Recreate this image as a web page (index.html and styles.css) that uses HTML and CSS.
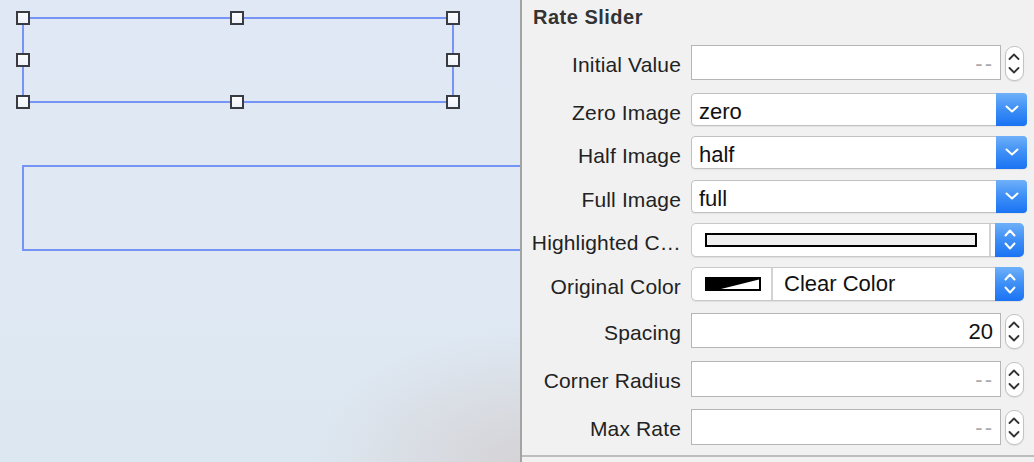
FILE: index.html
```html
<!DOCTYPE html>
<html lang="en">
<head>
<meta charset="utf-8">
<title>Rate Slider Inspector</title>
<link rel="stylesheet" href="styles.css">
</head>
<body>
<div class="app">
  <div class="canvas">
    <div class="view selected">
      <span class="handle tl"></span><span class="handle tc"></span><span class="handle tr"></span>
      <span class="handle ml"></span><span class="handle mr"></span>
      <span class="handle bl"></span><span class="handle bc"></span><span class="handle br"></span>
    </div>
    <div class="view second"></div>
  </div>

  <aside class="inspector">
    <h2 class="title">Rate Slider</h2>
    <div class="rows">
      <div class="row tall">
        <span class="label">Initial Value</span>
        <div class="control">
          <div class="field placeholder">--</div>
          <div class="stepper"><svg viewBox="0 0 17 33" width="17" height="33"><polyline points="3.5,12 8,7.5 12.5,12"/><polyline points="3.5,21 8,25.5 12.5,21"/></svg></div>
        </div>
      </div>
      <div class="row short">
        <span class="label">Zero Image</span>
        <div class="control">
          <div class="popup"><span class="popup-value">zero</span><span class="popup-arrow"><svg viewBox="0 0 14 8" width="14" height="8"><polyline points="1.5,1.5 7,6.5 12.5,1.5"/></svg></span></div>
        </div>
      </div>
      <div class="row">
        <span class="label">Half Image</span>
        <div class="control">
          <div class="popup"><span class="popup-value">half</span><span class="popup-arrow"><svg viewBox="0 0 14 8" width="14" height="8"><polyline points="1.5,1.5 7,6.5 12.5,1.5"/></svg></span></div>
        </div>
      </div>
      <div class="row short">
        <span class="label">Full Image</span>
        <div class="control">
          <div class="popup"><span class="popup-value">full</span><span class="popup-arrow"><svg viewBox="0 0 14 8" width="14" height="8"><polyline points="1.5,1.5 7,6.5 12.5,1.5"/></svg></span></div>
        </div>
      </div>
      <div class="row">
        <span class="label">Highlighted C…</span>
        <div class="control">
          <div class="well">
            <span class="well-swatch"><span class="bar"></span></span>
            <span class="well-sep"></span>
            <span class="well-arrow"><svg viewBox="0 0 12 22" width="12" height="22"><polyline points="1.5,6.5 6,1.5 10.5,6.5"/><polyline points="1.5,14.5 6,19.5 10.5,14.5"/></svg></span>
          </div>
        </div>
      </div>
      <div class="row mid">
        <span class="label">Original Color</span>
        <div class="control">
          <div class="well">
            <span class="well-chip"><svg viewBox="0 0 56 14" width="56" height="14"><rect x="1" y="1" width="54" height="12" fill="#fff" stroke="#000" stroke-width="2"/><polygon points="0,0 56,0 56,2 8,14 0,14" fill="#000"/></svg></span>
            <span class="well-text">Clear Color</span>
            <span class="well-arrow"><svg viewBox="0 0 12 22" width="12" height="22"><polyline points="1.5,6.5 6,1.5 10.5,6.5"/><polyline points="1.5,14.5 6,19.5 10.5,14.5"/></svg></span>
          </div>
        </div>
      </div>
      <div class="row tall">
        <span class="label">Spacing</span>
        <div class="control">
          <div class="field">20</div>
          <div class="stepper"><svg viewBox="0 0 17 33" width="17" height="33"><polyline points="3.5,12 8,7.5 12.5,12"/><polyline points="3.5,21 8,25.5 12.5,21"/></svg></div>
        </div>
      </div>
      <div class="row tall">
        <span class="label">Corner Radius</span>
        <div class="control">
          <div class="field placeholder">--</div>
          <div class="stepper"><svg viewBox="0 0 17 33" width="17" height="33"><polyline points="3.5,12 8,7.5 12.5,12"/><polyline points="3.5,21 8,25.5 12.5,21"/></svg></div>
        </div>
      </div>
      <div class="row last">
        <span class="label">Max Rate</span>
        <div class="control">
          <div class="field placeholder">--</div>
          <div class="stepper"><svg viewBox="0 0 17 33" width="17" height="33"><polyline points="3.5,12 8,7.5 12.5,12"/><polyline points="3.5,21 8,25.5 12.5,21"/></svg></div>
        </div>
      </div>
    </div>
    <div class="divider"></div>
  </aside>
</div>
</body>
</html>
```
FILE: styles.css
```css
html, body {
  margin: 0;
  padding: 0;
}
body {
  font-family: "Liberation Sans", Arial, sans-serif;
  background: #f1f1f1;
}
.app {
  display: flex;
  width: 1034px;
  height: 462px;
  overflow: hidden;
}

/* ---------- design canvas ---------- */
.canvas {
  position: relative;
  flex: none;
  width: 520px;
  height: 462px;
  overflow: hidden;
  border-right: 2px solid #a3a3a3;
  background:
    radial-gradient(ellipse 40% 28% at 100% 100%, rgba(213, 211, 214, 1) 0%, rgba(213, 211, 214, 0) 100%),
    linear-gradient(180deg, #e1e8f5 0%, #dfe8f3 55%, #dde7f1 100%);
}
.view {
  position: absolute;
  box-sizing: border-box;
  border: 2px solid #7594f5;
}
.view.selected {
  left: 22px;
  top: 17px;
  width: 432px;
  height: 86px;
}
.view.second {
  left: 22px;
  top: 165px;
  width: 620px;
  height: 86px;
}
.handle {
  position: absolute;
  box-sizing: border-box;
  width: 14px;
  height: 14px;
  border: 2px solid #393b40;
  background: linear-gradient(180deg, #fbfcff 0%, #eef2fa 100%);
}
.handle.tl { left: -8px; top: -8px; }
.handle.tc { left: calc(50% - 8px); top: -8px; }
.handle.tr { right: -8px; top: -8px; }
.handle.ml { left: -8px; top: calc(50% - 7px); }
.handle.mr { right: -8px; top: calc(50% - 7px); }
.handle.bl { left: -8px; bottom: -8px; }
.handle.bc { left: calc(50% - 8px); bottom: -8px; }
.handle.br { right: -8px; bottom: -8px; }

/* ---------- inspector ---------- */
.inspector {
  flex: 1;
  display: flex;
  flex-direction: column;
  background: #f1f1f1;
  color: #2c2c2c;
}
.title {
  margin: 0;
  padding: 2px 0 0 11px;
  height: 30px;
  line-height: 30px;
  font-size: 20px;
  font-weight: 700;
  letter-spacing: 0.5px;
  color: #333;
}
.rows {
  margin-top: 13px;
  display: flex;
  flex-direction: column;
}
.row {
  display: grid;
  grid-template-columns: 159px 1fr;
  column-gap: 10px;
  align-items: start;
  height: 44px;
}
.row.tall { height: 48px; }
.row.short { height: 43px; }
.row.mid { height: 46px; }
.row.last { height: 36px; }

.label {
  text-align: right;
  white-space: nowrap;
  font-size: 21px;
  line-height: 34px;
  padding-top: 3px;
  letter-spacing: 0.15px;
  color: #222;
}
.control {
  display: flex;
  align-items: flex-start;
  gap: 4px;
}

/* text field */
.field {
  box-sizing: border-box;
  width: 310px;
  height: 35px;
  border: 1px solid #b5b5b5;
  background: #fff;
  font-size: 22px;
  line-height: 30px;
  padding: 3px 7px 0;
  text-align: right;
  color: #111;
}
.row.tall:nth-child(8) .field,
.row.last .field { height: 36px; }
.field.placeholder {
  color: #a9a9a9;
  letter-spacing: 2px;
  padding-right: 6px;
}

/* stepper */
.stepper {
  box-sizing: border-box;
  width: 19px;
  height: 35px;
  margin-top: 1px;
  border: 1px solid #c3c3c3;
  border-radius: 9px;
  background: #fff;
  box-shadow: 0 1px 1px rgba(0, 0, 0, 0.08);
}
.stepper svg { display: block; }
.stepper polyline {
  fill: none;
  stroke: #333;
  stroke-width: 1.8;
  stroke-linecap: round;
  stroke-linejoin: round;
}

/* popup button */
.popup {
  box-sizing: border-box;
  display: flex;
  width: 336px;
  height: 33px;
  border: 1px solid #c1c1c1;
  border-radius: 4px;
  background: #fff;
  box-shadow: 0 1px 1px rgba(0, 0, 0, 0.06);
}
.popup-value {
  flex: 1;
  font-size: 22px;
  line-height: 26px;
  padding: 5px 0 0 7px;
  color: #111;
}
.popup-arrow {
  display: flex;
  align-items: center;
  justify-content: center;
  width: 31px;
  margin: -1px -1px -1px 0;
  border-radius: 0 4px 4px 0;
  background: linear-gradient(180deg, #6fb0f9 0%, #3d8ef6 50%, #1a73f4 100%);
}
.popup-arrow svg { display: block; margin-top: -1px; }
.popup-arrow polyline,
.well-arrow polyline {
  fill: none;
  stroke: #fff;
  stroke-width: 2;
  stroke-linecap: round;
  stroke-linejoin: round;
}

/* colour well */
.well {
  box-sizing: border-box;
  display: flex;
  width: 333px;
  height: 34px;
  border: 1px solid #c9c9c9;
  border-radius: 5px;
  background: #fff;
  box-shadow: 0 1px 1px rgba(0, 0, 0, 0.08);
}
.well-swatch {
  flex: 1;
  display: flex;
  align-items: center;
  padding-left: 13px;
}
.well-swatch .bar {
  box-sizing: border-box;
  width: 272px;
  height: 14px;
  border: 2px solid #000;
  background: #efefef;
}
.well-sep {
  width: 2px;
  background: #d3d3d3;
  margin-right: 4px;
}
.well-chip {
  display: flex;
  align-items: center;
  padding: 0 10px 0 13px;
  border-right: 2px solid #d3d3d3;
}
.well-chip svg { display: block; }
.well-text {
  flex: 1;
  font-size: 22px;
  line-height: 32px;
  padding-left: 11px;
  color: #111;
}
.well-arrow {
  display: flex;
  align-items: center;
  justify-content: center;
  width: 29px;
  margin: -1px -1px -1px 0;
  border-radius: 0 5px 5px 0;
  background: linear-gradient(180deg, #6fb0f9 0%, #3d8ef6 50%, #1a73f4 100%);
}
.well-arrow svg { display: block; }

.divider {
  margin-top: 10px;
  height: 2px;
  background: #bdbdbd;
}
```
